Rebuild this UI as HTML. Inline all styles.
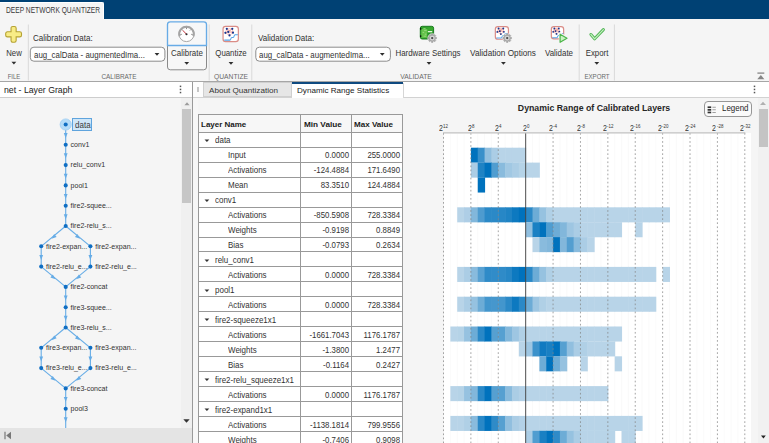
<!DOCTYPE html><html><head><meta charset="utf-8"><title>Deep Network Quantizer</title><style>
html,body{margin:0;padding:0;}
body{width:769px;height:443px;overflow:hidden;position:relative;background:#f5f5f5;font-family:"Liberation Sans",sans-serif;color:#222;}
.a{position:absolute;}
.t{position:absolute;white-space:nowrap;line-height:1;}
.ui{font-size:9.6px;color:#2a2a2a;}
.sec{font-size:8.2px;color:#6a6a6a;}
.c{transform:translateX(-50%);}
.r{transform:translateX(-100%);}
.arr{position:absolute;width:0;height:0;border-left:2.6px solid transparent;border-right:2.6px solid transparent;border-top:3px solid #333;}
.vsep{position:absolute;width:1px;background:#dcdcdc;}
.tb{font-size:8.6px;color:#222;}
.gl{font-size:7.05px;color:#333;}
</style></head><body>
<div class="a" style="left:0;top:0;width:769px;height:18.7px;background:#004174"></div>
<div class="a" style="left:0;top:18.7px;width:769px;height:1px;background:#fdfdfd"></div>
<div class="a" style="left:0;top:2px;width:103.8px;height:18px;background:#f5f5f5;border-top:1px solid #fff;border-right:1px solid #fff;border-radius:0 2px 0 0;box-sizing:border-box"></div>
<div class="t" style="left:5.70px;top:5.90px;font-size:8.4px;color:#3a3a3a;transform:scaleX(0.7942);transform-origin:0 0">DEEP NETWORK QUANTIZER</div>
<div class="a" style="left:0;top:19px;width:769px;height:61px;background:#f5f5f5"></div>
<svg class="a" style="left:0;top:19px" width="769" height="62" viewBox="0 19 769 62"><path d="M28.3 24.5V80.5" stroke="#d9d9d9" stroke-width="1"/><path d="M209.2 24.5V80.5" stroke="#d9d9d9" stroke-width="1"/><path d="M251.8 24.5V80.5" stroke="#d9d9d9" stroke-width="1"/><path d="M579.2 24.5V80.5" stroke="#d9d9d9" stroke-width="1"/><path d="M614.4 24.5V80.5" stroke="#d9d9d9" stroke-width="1"/><path d="M11.05 28.150000000000002 a1.7 1.7 0 0 1 1.7 -1.7 h1.6999999999999997 a1.7 1.7 0 0 1 1.7 1.7 V31.8 H19.8 a1.7 1.7 0 0 1 1.7 1.7 v1.6999999999999997 a1.7 1.7 0 0 1 -1.7 1.7 H16.15 V40.55 a1.7 1.7 0 0 1 -1.7 1.7 h-1.6999999999999997 a1.7 1.7 0 0 1 -1.7 -1.7 V36.9 H7.3999999999999995 a1.7 1.7 0 0 1 -1.7 -1.7 v-1.6999999999999997 a1.7 1.7 0 0 1 1.7 -1.7 H11.05 z" fill="#f8ec86" stroke="#b5a233" stroke-width="1.1"/><path d="M11.50 61.85h4.8L13.90 64.55z" fill="#2e2e2e"/><rect x="30.3" y="47.2" width="134.6" height="14" rx="3.6" fill="#fff" stroke="#8c8c8c" stroke-width="1"/><rect x="255.8" y="47.2" width="134.6" height="14" rx="3.6" fill="#fff" stroke="#8c8c8c" stroke-width="1"/><path d="M154.60 53.05h4.8L157.00 55.75z" fill="#2e2e2e"/><path d="M379.90 53.05h4.8L382.30 55.75z" fill="#2e2e2e"/><path d="M167.5 45.5V67a2.8 2.8 0 0 0 2.8 2.8h33.4a2.8 2.8 0 0 0 2.8-2.8V45.5" fill="#f7f7f7" stroke="#8a8a8a" stroke-width="1"/><path d="M167.5 45.5V24.6a2.8 2.8 0 0 1 2.8-2.8h33.4a2.8 2.8 0 0 1 2.8 2.8V45.5z" fill="#f6f7f8" stroke="#67abe6" stroke-width="1.35"/><circle cx="186.5" cy="34" r="7.6" fill="#fff" stroke="#a6a6a6" stroke-width="1"/><path d="M179.6 36.2A7.25 7.25 0 1 1 193.4 36.2" fill="none" stroke="#a4a4a4" stroke-width="2"/><g stroke="#6f6f6f" stroke-width="0.8"><path d="M186.5 27.6v1.5M180.4 34.6l1.4-.3M192.6 34.6l-1.4-.3M182.2 29.6l.9.9M190.8 29.6l-.9.9"/></g><path d="M186.5 34.2L182.9 30.5" stroke="#c9303a" stroke-width="1"/><circle cx="186.5" cy="34.2" r="1.05" fill="#2c2c2c"/><path d="M184.30 62.05h4.8L186.70 64.75z" fill="#2e2e2e"/><rect x="223.05" y="26.45" width="15.30" height="15.20" rx="2.6" fill="#fff" stroke="#da8c86" stroke-width="1.2"/><path d="M226.80 28.80L232.30 28.80M226.80 28.80L225.40 32.80M226.80 28.80L228.30 31.90M232.30 28.80L228.30 31.90M232.30 28.80L233.00 32.70M225.40 32.80L228.30 31.90M228.30 31.90L233.00 32.70M225.40 32.80L229.50 35.40M228.30 31.90L229.50 35.40M233.00 32.70L229.50 35.40M226.80 28.80L233.00 32.70M232.30 28.80L225.40 32.80" stroke="#f08a80" stroke-width="0.55" fill="none"/><circle cx="226.80" cy="28.80" r="1.08" fill="#15358f"/><circle cx="232.30" cy="28.80" r="1.08" fill="#15358f"/><circle cx="225.40" cy="32.80" r="1.08" fill="#15358f"/><circle cx="228.30" cy="31.90" r="1.08" fill="#15358f"/><circle cx="233.00" cy="32.70" r="1.08" fill="#15358f"/><circle cx="229.50" cy="35.40" r="1.08" fill="#15358f"/><path d="M224.30 40.10H229.90C231.10 40.10 230.50 37.50 231.90 37.40H233.10C234.50 37.40 233.70 35.00 235.10 34.80H237.90" fill="none" stroke="#55a4e8" stroke-width="1.05"/><path d="M228.60 62.05h4.8L231.00 64.75z" fill="#2e2e2e"/><rect x="420.3" y="26.3" width="13.3" height="12.7" rx="1.9" fill="#33a52c" stroke="#1b7a20" stroke-width="1"/><path d="M421.3 29h6.2v8.8h-6.2z" fill="#66c24c"/><path d="M427.4 32.6h5.6v5.6h-5.6z" fill="#249425"/><path d="M427.6 27.4h5.4v3.2h-5.4z" fill="#38aa2e"/><path d="M423.4 28.6h2.2M424.2 30.4h2.4M422.6 32.4h1.6M424.8 34.2h1.6M423.6 36.2h2.4" stroke="#a5e08c" stroke-width="0.8"/><rect x="427.9" y="31" width="4.3" height="1.3" fill="#e6f7df"/><rect x="420" y="28" width="1.3" height="1.7" fill="#0c1a0c"/><rect x="420" y="35.3" width="1.3" height="1.7" fill="#0c1a0c"/><circle cx="432.2" cy="38.1" r="4.800000000000001" fill="#f5f5f5" opacity=".75"/><path d="M436.54 37.36L436.54 38.84L435.41 39.02L435.13 39.72L435.79 40.64L434.74 41.69L433.82 41.03L433.12 41.31L432.94 42.44L431.46 42.44L431.28 41.31L430.58 41.03L429.66 41.69L428.61 40.64L429.27 39.72L428.99 39.02L427.86 38.84L427.86 37.36L428.99 37.18L429.27 36.48L428.61 35.56L429.66 34.51L430.58 35.17L431.28 34.89L431.46 33.76L432.94 33.76L433.12 34.89L433.82 35.17L434.74 34.51L435.79 35.56L435.13 36.48L435.41 37.18z" fill="#a9a9a9" stroke="#9b9b9b" stroke-width="0.5" stroke-linejoin="round"/><circle cx="432.2" cy="38.1" r="2.45" fill="#d6d6d6"/><circle cx="432.2" cy="38.1" r="1.15" fill="#484848"/><path d="M426.60 62.05h4.8L429.00 64.75z" fill="#2e2e2e"/><rect x="495.35" y="26.65" width="13.10" height="12.60" rx="2.6" fill="#fff" stroke="#da8c86" stroke-width="1.2"/><path d="M498.54 28.56L503.28 28.56M498.54 28.56L497.33 31.90M498.54 28.56L499.83 31.15M503.28 28.56L499.83 31.15M503.28 28.56L503.88 31.82M497.33 31.90L499.83 31.15M499.83 31.15L503.88 31.82M497.33 31.90L500.87 34.08M499.83 31.15L500.87 34.08M503.88 31.82L500.87 34.08M498.54 28.56L503.88 31.82M503.28 28.56L497.33 31.90" stroke="#f08a80" stroke-width="0.55" fill="none"/><circle cx="498.54" cy="28.56" r="0.94" fill="#15358f"/><circle cx="503.28" cy="28.56" r="0.94" fill="#15358f"/><circle cx="497.33" cy="31.90" r="0.94" fill="#15358f"/><circle cx="499.83" cy="31.15" r="0.94" fill="#15358f"/><circle cx="503.88" cy="31.82" r="0.94" fill="#15358f"/><circle cx="500.87" cy="34.08" r="0.94" fill="#15358f"/><path d="M496.38 38.01H501.21C502.25 38.01 501.73 35.84 502.94 35.75H503.97C505.18 35.75 504.49 33.74 505.69 33.58H508.11" fill="none" stroke="#55a4e8" stroke-width="1.05"/><circle cx="507.2" cy="38.1" r="4.800000000000001" fill="#f5f5f5" opacity=".75"/><path d="M511.54 37.36L511.54 38.84L510.41 39.02L510.13 39.72L510.79 40.64L509.74 41.69L508.82 41.03L508.12 41.31L507.94 42.44L506.46 42.44L506.28 41.31L505.58 41.03L504.66 41.69L503.61 40.64L504.27 39.72L503.99 39.02L502.86 38.84L502.86 37.36L503.99 37.18L504.27 36.48L503.61 35.56L504.66 34.51L505.58 35.17L506.28 34.89L506.46 33.76L507.94 33.76L508.12 34.89L508.82 35.17L509.74 34.51L510.79 35.56L510.13 36.48L510.41 37.18z" fill="#a9a9a9" stroke="#9b9b9b" stroke-width="0.5" stroke-linejoin="round"/><circle cx="507.2" cy="38.1" r="2.45" fill="#d6d6d6"/><circle cx="507.2" cy="38.1" r="1.15" fill="#484848"/><path d="M501.00 62.05h4.8L503.40 64.75z" fill="#2e2e2e"/><rect x="551.35" y="26.65" width="12.30" height="12.30" rx="2.6" fill="#fff" stroke="#da8c86" stroke-width="1.2"/><path d="M554.33 28.51L558.80 28.51M554.33 28.51L553.19 31.78M554.33 28.51L555.55 31.04M558.80 28.51L555.55 31.04M558.80 28.51L559.37 31.70M553.19 31.78L555.55 31.04M555.55 31.04L559.37 31.70M553.19 31.78L556.52 33.90M555.55 31.04L556.52 33.90M559.37 31.70L556.52 33.90M554.33 28.51L559.37 31.70M558.80 28.51L553.19 31.78" stroke="#f08a80" stroke-width="0.55" fill="none"/><circle cx="554.33" cy="28.51" r="0.89" fill="#15358f"/><circle cx="558.80" cy="28.51" r="0.89" fill="#15358f"/><circle cx="553.19" cy="31.78" r="0.89" fill="#15358f"/><circle cx="555.55" cy="31.04" r="0.89" fill="#15358f"/><circle cx="559.37" cy="31.70" r="0.89" fill="#15358f"/><circle cx="556.52" cy="33.90" r="0.89" fill="#15358f"/><path d="M552.30 37.75H556.85C557.83 37.75 557.34 35.62 558.48 35.54H559.45C560.59 35.54 559.94 33.58 561.08 33.41H563.35" fill="none" stroke="#55a4e8" stroke-width="1.05"/><path d="M560 33.6L560 42.7L567.4 38.1z" fill="#f5f5f5" stroke="#f5f5f5" stroke-width="2.4" stroke-linejoin="round"/><path d="M560.1 34.2L560.1 42.3L567 38.2z" fill="#c9f2c2" stroke="#4bb548" stroke-width="1.2" stroke-linejoin="round"/><path d="M590.9 34.5L594.6 38.8L603.4 29.6" fill="none" stroke="#4fb354" stroke-width="3" stroke-linecap="round" stroke-linejoin="round"/><path d="M590.9 34.5L594.6 38.8L603.4 29.6" fill="none" stroke="#c6f2c0" stroke-width="1.2" stroke-linecap="round" stroke-linejoin="round"/><path d="M594.40 62.05h4.8L596.80 64.75z" fill="#2e2e2e"/><path d="M757.4 73.1h6.9" stroke="#858585" stroke-width="1.3"/><path d="M757.3 79.3L760.85 75.1L764.4 79.3z" fill="#858585"/></svg>
<div class="t" style="left:13.80px;top:49.90px;font-size:8.2px;color:#323232;transform:translateX(-50%) scaleX(0.9449);transform-origin:50% 0">New</div>
<div class="t" style="left:13.80px;top:72.70px;font-size:7.3px;color:#6a6a6a;transform:translateX(-50%) scaleX(0.8108);transform-origin:50% 0">FILE</div>
<div class="t" style="left:32.50px;top:35.00px;font-size:8.2px;color:#323232;transform:scaleX(0.9791);transform-origin:0 0">Calibration Data:</div>
<div class="t" style="left:33.80px;top:51.70px;font-size:8.2px;color:#323232;transform:scaleX(0.9663);transform-origin:0 0">aug_calData - augmentedIma...</div>
<div class="t" style="left:118.50px;top:72.70px;font-size:7.3px;color:#6a6a6a;transform:translateX(-50%) scaleX(0.8769);transform-origin:50% 0">CALIBRATE</div>
<div class="t" style="left:186.50px;top:49.90px;font-size:8.2px;color:#323232;transform:translateX(-50%) scaleX(0.9690);transform-origin:50% 0">Calibrate</div>
<div class="t" style="left:230.80px;top:49.90px;font-size:8.2px;color:#323232;transform:translateX(-50%) scaleX(0.9598);transform-origin:50% 0">Quantize</div>
<div class="t" style="left:231.00px;top:72.70px;font-size:7.3px;color:#6a6a6a;transform:translateX(-50%) scaleX(0.9212);transform-origin:50% 0">QUANTIZE</div>
<div class="t" style="left:257.70px;top:35.00px;font-size:8.2px;color:#323232;transform:scaleX(0.9811);transform-origin:0 0">Validation Data:</div>
<div class="t" style="left:259.30px;top:51.70px;font-size:8.2px;color:#323232;transform:scaleX(0.9646);transform-origin:0 0">aug_calData - augmentedIma...</div>
<div class="t" style="left:428.40px;top:49.90px;font-size:8.2px;color:#323232;transform:translateX(-50%) scaleX(0.9666);transform-origin:50% 0">Hardware Settings</div>
<div class="t" style="left:416.20px;top:72.70px;font-size:7.3px;color:#6a6a6a;transform:translateX(-50%) scaleX(0.9236);transform-origin:50% 0">VALIDATE</div>
<div class="t" style="left:503.40px;top:49.90px;font-size:8.2px;color:#323232;transform:translateX(-50%) scaleX(1.0008);transform-origin:50% 0">Validation Options</div>
<div class="t" style="left:559.40px;top:49.90px;font-size:8.2px;color:#323232;transform:translateX(-50%) scaleX(0.9681);transform-origin:50% 0">Validate</div>
<div class="t" style="left:596.80px;top:49.90px;font-size:8.2px;color:#323232;transform:translateX(-50%) scaleX(0.9578);transform-origin:50% 0">Export</div>
<div class="t" style="left:596.80px;top:72.70px;font-size:7.3px;color:#6a6a6a;transform:translateX(-50%) scaleX(0.8432);transform-origin:50% 0">EXPORT</div>
<div class="a" style="left:0;top:81px;width:192px;height:16px;background:#fff"></div>
<div class="a" style="left:0;top:96.8px;width:192px;height:1px;background:#cdcdcd"></div>
<div class="t" style="left:4.20px;top:85.80px;font-size:8.9px;color:#1a1a1a;transform:scaleX(0.9834);transform-origin:0 0">net - Layer Graph</div>
<svg class="a" style="left:178.9px;top:84.8px" width="3" height="9" viewBox="0 0 3 9"><g fill="#555"><rect x="0.75" y="0.6" width="1.5" height="1.5"/><rect x="0.75" y="3.7" width="1.5" height="1.5"/><rect x="0.75" y="6.8" width="1.5" height="1.5"/></g></svg>
<div class="a" style="left:0;top:97.8px;width:181.4px;height:330.2px;background:#f5f5f5"></div>
<div class="a" style="left:181.4px;top:97.8px;width:10.6px;height:330.2px;background:#f0f0f0"></div>
<div class="a" style="left:182px;top:109.3px;width:9px;height:93.5px;background:#c6c6c6"></div>
<svg class="a" style="left:182.5px;top:100.6px" width="8" height="5" viewBox="0 0 8 5"><path d="M1.4 4.2L4 1.2L6.6 4.2z" fill="#9c9c9c"/></svg>
<svg class="a" style="left:183.3px;top:418.5px" width="7" height="4" viewBox="0 0 7 4"><path d="M0.3 0.3h6.4L3.5 3.8z" fill="#333"/></svg>
<div class="a" style="left:0;top:428px;width:192px;height:15px;background:#e4e4e4"></div>
<svg class="a" style="left:4px;top:431px" width="8" height="9" viewBox="0 0 8 9"><path d="M1 0.8v7.4" stroke="#777" stroke-width="1.2"/><path d="M7 0.8v7.4L2.2 4.5z" fill="#777"/></svg>
<div class="a" style="left:192px;top:81px;width:1px;height:362px;background:#9a9a9a"></div>
<div class="a" style="left:193px;top:81px;width:5px;height:362px;background:#f7f7f7"></div>
<svg class="a" style="left:0;top:99px" width="181" height="329" viewBox="0 99 181 329"><path d="M65.7 124.5L65.7 144.8" stroke="#66acE6" stroke-width="1.1" fill="none"/><path d="M-1.9 -2.5L1.9 -2.5L0 2.6z" fill="#66acE6" transform="translate(65.7,135.6) rotate(0.0)"/><path d="M65.7 144.8L65.7 165.1" stroke="#66acE6" stroke-width="1.1" fill="none"/><path d="M-1.9 -2.5L1.9 -2.5L0 2.6z" fill="#66acE6" transform="translate(65.7,155.8) rotate(0.0)"/><path d="M65.7 165.1L65.7 185.4" stroke="#66acE6" stroke-width="1.1" fill="none"/><path d="M-1.9 -2.5L1.9 -2.5L0 2.6z" fill="#66acE6" transform="translate(65.7,176.2) rotate(0.0)"/><path d="M65.7 185.4L65.7 205.7" stroke="#66acE6" stroke-width="1.1" fill="none"/><path d="M-1.9 -2.5L1.9 -2.5L0 2.6z" fill="#66acE6" transform="translate(65.7,196.5) rotate(0.0)"/><path d="M65.7 205.7L65.7 226.0" stroke="#66acE6" stroke-width="1.1" fill="none"/><path d="M-1.9 -2.5L1.9 -2.5L0 2.6z" fill="#66acE6" transform="translate(65.7,216.8) rotate(0.0)"/><path d="M65.7 226.0L41.2 246.3" stroke="#66acE6" stroke-width="1.1" fill="none"/><path d="M-1.9 -2.5L1.9 -2.5L0 2.6z" fill="#66acE6" transform="translate(53.5,237.1) rotate(50.4)"/><path d="M65.7 226.0L90.4 246.3" stroke="#66acE6" stroke-width="1.1" fill="none"/><path d="M-1.9 -2.5L1.9 -2.5L0 2.6z" fill="#66acE6" transform="translate(78.1,237.1) rotate(-50.6)"/><path d="M41.2 246.3L41.2 266.6" stroke="#66acE6" stroke-width="1.1" fill="none"/><path d="M-1.9 -2.5L1.9 -2.5L0 2.6z" fill="#66acE6" transform="translate(41.2,257.4) rotate(0.0)"/><path d="M90.4 246.3L90.4 266.6" stroke="#66acE6" stroke-width="1.1" fill="none"/><path d="M-1.9 -2.5L1.9 -2.5L0 2.6z" fill="#66acE6" transform="translate(90.4,257.4) rotate(0.0)"/><path d="M41.2 266.6L65.7 286.9" stroke="#66acE6" stroke-width="1.1" fill="none"/><path d="M-1.9 -2.5L1.9 -2.5L0 2.6z" fill="#66acE6" transform="translate(53.5,277.6) rotate(-50.4)"/><path d="M90.4 266.6L65.7 286.9" stroke="#66acE6" stroke-width="1.1" fill="none"/><path d="M-1.9 -2.5L1.9 -2.5L0 2.6z" fill="#66acE6" transform="translate(78.1,277.6) rotate(50.6)"/><path d="M65.7 286.9L65.7 307.2" stroke="#66acE6" stroke-width="1.1" fill="none"/><path d="M-1.9 -2.5L1.9 -2.5L0 2.6z" fill="#66acE6" transform="translate(65.7,297.9) rotate(0.0)"/><path d="M65.7 307.2L65.7 327.5" stroke="#66acE6" stroke-width="1.1" fill="none"/><path d="M-1.9 -2.5L1.9 -2.5L0 2.6z" fill="#66acE6" transform="translate(65.7,318.2) rotate(0.0)"/><path d="M65.7 327.5L41.2 347.8" stroke="#66acE6" stroke-width="1.1" fill="none"/><path d="M-1.9 -2.5L1.9 -2.5L0 2.6z" fill="#66acE6" transform="translate(53.5,338.5) rotate(50.4)"/><path d="M65.7 327.5L90.4 347.8" stroke="#66acE6" stroke-width="1.1" fill="none"/><path d="M-1.9 -2.5L1.9 -2.5L0 2.6z" fill="#66acE6" transform="translate(78.1,338.5) rotate(-50.6)"/><path d="M41.2 347.8L41.2 368.1" stroke="#66acE6" stroke-width="1.1" fill="none"/><path d="M-1.9 -2.5L1.9 -2.5L0 2.6z" fill="#66acE6" transform="translate(41.2,358.9) rotate(0.0)"/><path d="M90.4 347.8L90.4 368.1" stroke="#66acE6" stroke-width="1.1" fill="none"/><path d="M-1.9 -2.5L1.9 -2.5L0 2.6z" fill="#66acE6" transform="translate(90.4,358.9) rotate(0.0)"/><path d="M41.2 368.1L65.7 388.4" stroke="#66acE6" stroke-width="1.1" fill="none"/><path d="M-1.9 -2.5L1.9 -2.5L0 2.6z" fill="#66acE6" transform="translate(53.5,379.1) rotate(-50.4)"/><path d="M90.4 368.1L65.7 388.4" stroke="#66acE6" stroke-width="1.1" fill="none"/><path d="M-1.9 -2.5L1.9 -2.5L0 2.6z" fill="#66acE6" transform="translate(78.1,379.1) rotate(50.6)"/><path d="M65.7 388.4L65.7 408.7" stroke="#66acE6" stroke-width="1.1" fill="none"/><path d="M-1.9 -2.5L1.9 -2.5L0 2.6z" fill="#66acE6" transform="translate(65.7,399.4) rotate(0.0)"/><path d="M65.7 408.7L65.7 429.0" stroke="#66acE6" stroke-width="1.1" fill="none"/><path d="M-1.9 -2.5L1.9 -2.5L0 2.6z" fill="#66acE6" transform="translate(65.7,419.8) rotate(0.0)"/><circle cx="65.7" cy="124.5" r="5.6" fill="#b5dcf8" stroke="#9ccdf3" stroke-width="0.8"/><circle cx="65.7" cy="124.5" r="2.05" fill="#0f6ec3"/><circle cx="65.7" cy="144.8" r="2.05" fill="#0f6ec3"/><circle cx="65.7" cy="165.1" r="2.05" fill="#0f6ec3"/><circle cx="65.7" cy="185.4" r="2.05" fill="#0f6ec3"/><circle cx="65.7" cy="205.7" r="2.05" fill="#0f6ec3"/><circle cx="65.7" cy="226.0" r="2.05" fill="#0f6ec3"/><circle cx="41.2" cy="246.3" r="2.05" fill="#0f6ec3"/><circle cx="90.4" cy="246.3" r="2.05" fill="#0f6ec3"/><circle cx="41.2" cy="266.6" r="2.05" fill="#0f6ec3"/><circle cx="90.4" cy="266.6" r="2.05" fill="#0f6ec3"/><circle cx="65.7" cy="286.9" r="2.05" fill="#0f6ec3"/><circle cx="65.7" cy="307.2" r="2.05" fill="#0f6ec3"/><circle cx="65.7" cy="327.5" r="2.05" fill="#0f6ec3"/><circle cx="41.2" cy="347.8" r="2.05" fill="#0f6ec3"/><circle cx="90.4" cy="347.8" r="2.05" fill="#0f6ec3"/><circle cx="41.2" cy="368.1" r="2.05" fill="#0f6ec3"/><circle cx="90.4" cy="368.1" r="2.05" fill="#0f6ec3"/><circle cx="65.7" cy="388.4" r="2.05" fill="#0f6ec3"/><circle cx="65.7" cy="408.7" r="2.05" fill="#0f6ec3"/></svg>
<div class="a" style="left:72.2px;top:118px;width:20.3px;height:13.4px;background:#cfe6f8;border:0.9px solid #5fa4dd;box-sizing:border-box"></div>
<div class="t" style="left:75.00px;top:120.60px;font-size:8.3px;color:#3a3a3a;transform:scaleX(0.9657);transform-origin:0 0">data</div>
<div class="t gl" style="left:70.6px;top:141.1px">conv1</div>
<div class="t gl" style="left:70.6px;top:161.4px">relu_conv1</div>
<div class="t gl" style="left:70.6px;top:181.7px">pool1</div>
<div class="t gl" style="left:70.6px;top:202.0px">fire2-squee...</div>
<div class="t gl" style="left:70.6px;top:222.3px">fire2-relu_s...</div>
<div class="t gl" style="left:46.1px;top:242.6px">fire2-expan...</div>
<div class="t gl" style="left:95.3px;top:242.6px">fire2-expan...</div>
<div class="t gl" style="left:46.1px;top:262.9px">fire2-relu_e...</div>
<div class="t gl" style="left:95.3px;top:262.9px">fire2-relu_e...</div>
<div class="t gl" style="left:70.6px;top:283.2px">fire2-concat</div>
<div class="t gl" style="left:70.6px;top:303.5px">fire3-squee...</div>
<div class="t gl" style="left:70.6px;top:323.8px">fire3-relu_s...</div>
<div class="t gl" style="left:46.1px;top:344.1px">fire3-expan...</div>
<div class="t gl" style="left:95.3px;top:344.1px">fire3-expan...</div>
<div class="t gl" style="left:46.1px;top:364.4px">fire3-relu_e...</div>
<div class="t gl" style="left:95.3px;top:364.4px">fire3-relu_e...</div>
<div class="t gl" style="left:70.6px;top:384.7px">fire3-concat</div>
<div class="t gl" style="left:70.6px;top:405.0px">pool3</div>
<div class="a" style="left:198px;top:81px;width:571px;height:16.5px;background:#fff"></div>
<div class="a" style="left:193px;top:96.8px;width:576px;height:1px;background:#d2d2d2"></div>
<div class="a" style="left:193px;top:81px;width:10.5px;height:16px;background:#fdfdfd"></div>
<div class="a" style="left:197.3px;top:86.6px;width:1.9px;height:5px;background:#c6c6c6"></div>
<div class="a" style="left:203.2px;top:82.3px;width:88.4px;height:15px;background:#e6e6e6;border:1px solid #cfcfcf;box-sizing:border-box"></div>
<div class="t" style="left:209.10px;top:86.70px;font-size:8.1px;color:#333;transform:scaleX(1.0000);transform-origin:0 0">About Quantization</div>
<div class="a" style="left:291.6px;top:81px;width:111.6px;height:17px;background:#fff"></div>
<div class="a" style="left:0;top:81.3px;width:769px;height:1px;background:#a6a6a6"></div>
<div class="a" style="left:291.6px;top:81.9px;width:111.6px;height:1.9px;background:#0f4a80"></div>
<div class="a" style="left:403.2px;top:83px;width:1px;height:14.5px;background:#d6d6d6"></div>
<div class="t" style="left:297.00px;top:86.70px;font-size:8.1px;color:#1a1a1a;transform:scaleX(1.0000);transform-origin:0 0">Dynamic Range Statistics</div>
<svg class="a" style="left:753.3px;top:85px" width="3" height="9" viewBox="0 0 3 9"><g fill="#555"><rect x="0.75" y="0.6" width="1.5" height="1.5"/><rect x="0.75" y="3.7" width="1.5" height="1.5"/><rect x="0.75" y="6.8" width="1.5" height="1.5"/></g></svg>
<div class="a" style="left:198.4px;top:114.6px;width:204.20000000000002px;height:328.4px;background:#fff"></div>
<div class="a" style="left:198.4px;top:114.6px;width:204.20000000000002px;height:17.700000000000017px;background:#f7f7f7"></div>
<div class="a" style="left:198.4px;top:114.1px;width:204.70000000000002px;height:1px;background:#999"></div>
<div class="a" style="left:198.4px;top:131.80px;width:204.20000000000002px;height:1px;background:#999"></div>
<div class="a" style="left:198.4px;top:146.76px;width:204.20000000000002px;height:1px;background:#999"></div>
<div class="a" style="left:198.4px;top:161.72px;width:204.20000000000002px;height:1px;background:#999"></div>
<div class="a" style="left:198.4px;top:176.68px;width:204.20000000000002px;height:1px;background:#999"></div>
<div class="a" style="left:198.4px;top:191.64px;width:204.20000000000002px;height:1px;background:#999"></div>
<div class="a" style="left:198.4px;top:206.60px;width:204.20000000000002px;height:1px;background:#999"></div>
<div class="a" style="left:198.4px;top:221.56px;width:204.20000000000002px;height:1px;background:#999"></div>
<div class="a" style="left:198.4px;top:236.52px;width:204.20000000000002px;height:1px;background:#999"></div>
<div class="a" style="left:198.4px;top:251.48px;width:204.20000000000002px;height:1px;background:#999"></div>
<div class="a" style="left:198.4px;top:266.44px;width:204.20000000000002px;height:1px;background:#999"></div>
<div class="a" style="left:198.4px;top:281.40px;width:204.20000000000002px;height:1px;background:#999"></div>
<div class="a" style="left:198.4px;top:296.36px;width:204.20000000000002px;height:1px;background:#999"></div>
<div class="a" style="left:198.4px;top:311.32px;width:204.20000000000002px;height:1px;background:#999"></div>
<div class="a" style="left:198.4px;top:326.28px;width:204.20000000000002px;height:1px;background:#999"></div>
<div class="a" style="left:198.4px;top:341.24px;width:204.20000000000002px;height:1px;background:#999"></div>
<div class="a" style="left:198.4px;top:356.20px;width:204.20000000000002px;height:1px;background:#999"></div>
<div class="a" style="left:198.4px;top:371.16px;width:204.20000000000002px;height:1px;background:#999"></div>
<div class="a" style="left:198.4px;top:386.12px;width:204.20000000000002px;height:1px;background:#999"></div>
<div class="a" style="left:198.4px;top:401.08px;width:204.20000000000002px;height:1px;background:#999"></div>
<div class="a" style="left:198.4px;top:416.04px;width:204.20000000000002px;height:1px;background:#999"></div>
<div class="a" style="left:198.4px;top:431.00px;width:204.20000000000002px;height:1px;background:#999"></div>
<div class="a" style="left:197.9px;top:114.1px;width:1px;height:329.4px;background:#999"></div>
<div class="a" style="left:300.1px;top:114.1px;width:1px;height:329.4px;background:#999"></div>
<div class="a" style="left:351.0px;top:114.1px;width:1px;height:329.4px;background:#999"></div>
<div class="a" style="left:402.1px;top:114.1px;width:1px;height:329.4px;background:#999"></div>
<div class="t" style="left:201.40px;top:121.20px;font-size:8.1px;color:#1a1a1a;font-weight:bold;transform:scaleX(0.9863);transform-origin:0 0">Layer Name</div>
<div class="t" style="left:303.80px;top:121.20px;font-size:8.1px;color:#1a1a1a;font-weight:bold;transform:scaleX(1.0118);transform-origin:0 0">Min Value</div>
<div class="t" style="left:354.20px;top:121.20px;font-size:8.1px;color:#1a1a1a;font-weight:bold;transform:scaleX(0.9956);transform-origin:0 0">Max Value</div>
<svg class="a" style="left:204px;top:138.90px" width="6" height="4" viewBox="0 0 6 4"><path d="M0.5 0.4h4.8L2.9 3z" fill="#333"/></svg>
<div class="t" style="left:215.20px;top:137.40px;font-size:8.2px;color:#323232;transform:scaleX(0.9750);transform-origin:0 0">data</div>
<div class="t" style="left:227.80px;top:152.36px;font-size:8.2px;color:#323232;transform:scaleX(0.9750);transform-origin:0 0">Input</div>
<div class="t" style="left:349.20px;top:152.36px;font-size:8.2px;color:#323232;transform:translateX(-100%) scaleX(0.9550);transform-origin:100% 0">0.0000</div>
<div class="t" style="left:400.10px;top:152.36px;font-size:8.2px;color:#323232;transform:translateX(-100%) scaleX(0.9550);transform-origin:100% 0">255.0000</div>
<div class="t" style="left:227.80px;top:167.32px;font-size:8.2px;color:#323232;transform:scaleX(0.9750);transform-origin:0 0">Activations</div>
<div class="t" style="left:349.20px;top:167.32px;font-size:8.2px;color:#323232;transform:translateX(-100%) scaleX(0.9550);transform-origin:100% 0">-124.4884</div>
<div class="t" style="left:400.10px;top:167.32px;font-size:8.2px;color:#323232;transform:translateX(-100%) scaleX(0.9550);transform-origin:100% 0">171.6490</div>
<div class="t" style="left:227.80px;top:182.28px;font-size:8.2px;color:#323232;transform:scaleX(0.9750);transform-origin:0 0">Mean</div>
<div class="t" style="left:349.20px;top:182.28px;font-size:8.2px;color:#323232;transform:translateX(-100%) scaleX(0.9550);transform-origin:100% 0">83.3510</div>
<div class="t" style="left:400.10px;top:182.28px;font-size:8.2px;color:#323232;transform:translateX(-100%) scaleX(0.9550);transform-origin:100% 0">124.4884</div>
<svg class="a" style="left:204px;top:198.74px" width="6" height="4" viewBox="0 0 6 4"><path d="M0.5 0.4h4.8L2.9 3z" fill="#333"/></svg>
<div class="t" style="left:215.20px;top:197.24px;font-size:8.2px;color:#323232;transform:scaleX(0.9750);transform-origin:0 0">conv1</div>
<div class="t" style="left:227.80px;top:212.20px;font-size:8.2px;color:#323232;transform:scaleX(0.9750);transform-origin:0 0">Activations</div>
<div class="t" style="left:349.20px;top:212.20px;font-size:8.2px;color:#323232;transform:translateX(-100%) scaleX(0.9550);transform-origin:100% 0">-850.5908</div>
<div class="t" style="left:400.10px;top:212.20px;font-size:8.2px;color:#323232;transform:translateX(-100%) scaleX(0.9550);transform-origin:100% 0">728.3384</div>
<div class="t" style="left:227.80px;top:227.16px;font-size:8.2px;color:#323232;transform:scaleX(0.9750);transform-origin:0 0">Weights</div>
<div class="t" style="left:349.20px;top:227.16px;font-size:8.2px;color:#323232;transform:translateX(-100%) scaleX(0.9550);transform-origin:100% 0">-0.9198</div>
<div class="t" style="left:400.10px;top:227.16px;font-size:8.2px;color:#323232;transform:translateX(-100%) scaleX(0.9550);transform-origin:100% 0">0.8849</div>
<div class="t" style="left:227.80px;top:242.12px;font-size:8.2px;color:#323232;transform:scaleX(0.9750);transform-origin:0 0">Bias</div>
<div class="t" style="left:349.20px;top:242.12px;font-size:8.2px;color:#323232;transform:translateX(-100%) scaleX(0.9550);transform-origin:100% 0">-0.0793</div>
<div class="t" style="left:400.10px;top:242.12px;font-size:8.2px;color:#323232;transform:translateX(-100%) scaleX(0.9550);transform-origin:100% 0">0.2634</div>
<svg class="a" style="left:204px;top:258.58px" width="6" height="4" viewBox="0 0 6 4"><path d="M0.5 0.4h4.8L2.9 3z" fill="#333"/></svg>
<div class="t" style="left:215.20px;top:257.08px;font-size:8.2px;color:#323232;transform:scaleX(0.9750);transform-origin:0 0">relu_conv1</div>
<div class="t" style="left:227.80px;top:272.04px;font-size:8.2px;color:#323232;transform:scaleX(0.9750);transform-origin:0 0">Activations</div>
<div class="t" style="left:349.20px;top:272.04px;font-size:8.2px;color:#323232;transform:translateX(-100%) scaleX(0.9550);transform-origin:100% 0">0.0000</div>
<div class="t" style="left:400.10px;top:272.04px;font-size:8.2px;color:#323232;transform:translateX(-100%) scaleX(0.9550);transform-origin:100% 0">728.3384</div>
<svg class="a" style="left:204px;top:288.50px" width="6" height="4" viewBox="0 0 6 4"><path d="M0.5 0.4h4.8L2.9 3z" fill="#333"/></svg>
<div class="t" style="left:215.20px;top:287.00px;font-size:8.2px;color:#323232;transform:scaleX(0.9750);transform-origin:0 0">pool1</div>
<div class="t" style="left:227.80px;top:301.96px;font-size:8.2px;color:#323232;transform:scaleX(0.9750);transform-origin:0 0">Activations</div>
<div class="t" style="left:349.20px;top:301.96px;font-size:8.2px;color:#323232;transform:translateX(-100%) scaleX(0.9550);transform-origin:100% 0">0.0000</div>
<div class="t" style="left:400.10px;top:301.96px;font-size:8.2px;color:#323232;transform:translateX(-100%) scaleX(0.9550);transform-origin:100% 0">728.3384</div>
<svg class="a" style="left:204px;top:318.42px" width="6" height="4" viewBox="0 0 6 4"><path d="M0.5 0.4h4.8L2.9 3z" fill="#333"/></svg>
<div class="t" style="left:215.20px;top:316.92px;font-size:8.2px;color:#323232;transform:scaleX(0.9750);transform-origin:0 0">fire2-squeeze1x1</div>
<div class="t" style="left:227.80px;top:331.88px;font-size:8.2px;color:#323232;transform:scaleX(0.9750);transform-origin:0 0">Activations</div>
<div class="t" style="left:349.20px;top:331.88px;font-size:8.2px;color:#323232;transform:translateX(-100%) scaleX(0.9550);transform-origin:100% 0">-1661.7043</div>
<div class="t" style="left:400.10px;top:331.88px;font-size:8.2px;color:#323232;transform:translateX(-100%) scaleX(0.9550);transform-origin:100% 0">1176.1787</div>
<div class="t" style="left:227.80px;top:346.84px;font-size:8.2px;color:#323232;transform:scaleX(0.9750);transform-origin:0 0">Weights</div>
<div class="t" style="left:349.20px;top:346.84px;font-size:8.2px;color:#323232;transform:translateX(-100%) scaleX(0.9550);transform-origin:100% 0">-1.3800</div>
<div class="t" style="left:400.10px;top:346.84px;font-size:8.2px;color:#323232;transform:translateX(-100%) scaleX(0.9550);transform-origin:100% 0">1.2477</div>
<div class="t" style="left:227.80px;top:361.80px;font-size:8.2px;color:#323232;transform:scaleX(0.9750);transform-origin:0 0">Bias</div>
<div class="t" style="left:349.20px;top:361.80px;font-size:8.2px;color:#323232;transform:translateX(-100%) scaleX(0.9550);transform-origin:100% 0">-0.1164</div>
<div class="t" style="left:400.10px;top:361.80px;font-size:8.2px;color:#323232;transform:translateX(-100%) scaleX(0.9550);transform-origin:100% 0">0.2427</div>
<svg class="a" style="left:204px;top:378.26px" width="6" height="4" viewBox="0 0 6 4"><path d="M0.5 0.4h4.8L2.9 3z" fill="#333"/></svg>
<div class="t" style="left:215.20px;top:376.76px;font-size:8.2px;color:#323232;transform:scaleX(0.9750);transform-origin:0 0">fire2-relu_squeeze1x1</div>
<div class="t" style="left:227.80px;top:391.72px;font-size:8.2px;color:#323232;transform:scaleX(0.9750);transform-origin:0 0">Activations</div>
<div class="t" style="left:349.20px;top:391.72px;font-size:8.2px;color:#323232;transform:translateX(-100%) scaleX(0.9550);transform-origin:100% 0">0.0000</div>
<div class="t" style="left:400.10px;top:391.72px;font-size:8.2px;color:#323232;transform:translateX(-100%) scaleX(0.9550);transform-origin:100% 0">1176.1787</div>
<svg class="a" style="left:204px;top:408.18px" width="6" height="4" viewBox="0 0 6 4"><path d="M0.5 0.4h4.8L2.9 3z" fill="#333"/></svg>
<div class="t" style="left:215.20px;top:406.68px;font-size:8.2px;color:#323232;transform:scaleX(0.9750);transform-origin:0 0">fire2-expand1x1</div>
<div class="t" style="left:227.80px;top:421.64px;font-size:8.2px;color:#323232;transform:scaleX(0.9750);transform-origin:0 0">Activations</div>
<div class="t" style="left:349.20px;top:421.64px;font-size:8.2px;color:#323232;transform:translateX(-100%) scaleX(0.9550);transform-origin:100% 0">-1138.1814</div>
<div class="t" style="left:400.10px;top:421.64px;font-size:8.2px;color:#323232;transform:translateX(-100%) scaleX(0.9550);transform-origin:100% 0">799.9556</div>
<div class="t" style="left:227.80px;top:436.60px;font-size:8.2px;color:#323232;transform:scaleX(0.9750);transform-origin:0 0">Weights</div>
<div class="t" style="left:349.20px;top:436.60px;font-size:8.2px;color:#323232;transform:translateX(-100%) scaleX(0.9550);transform-origin:100% 0">-0.7406</div>
<div class="t" style="left:400.10px;top:436.60px;font-size:8.2px;color:#323232;transform:translateX(-100%) scaleX(0.9550);transform-origin:100% 0">0.9098</div>
<div class="a" style="left:443.5px;top:133px;width:307.79999999999995px;height:310px;background:#fff"></div>
<div class="t" style="left:593.70px;top:104.20px;font-size:9.2px;color:#262626;font-weight:bold;transform:translateX(-50%) scaleX(0.9536);transform-origin:50% 0">Dynamic Range of Calibrated Layers</div>
<div class="a" style="left:704.3px;top:101.1px;width:47.6px;height:16px;border:1px solid #969696;border-radius:4px;background:#fafafa;box-sizing:border-box"></div>
<svg class="a" style="left:707px;top:104.5px" width="10" height="10" viewBox="0 0 10 10"><g fill="#333"><rect x="0.6" y="1.4" width="3.6" height="1.7"/><rect x="0.6" y="4.0" width="3.6" height="1.7"/><rect x="0.6" y="6.6" width="3.6" height="1.7"/></g><g fill="#8a8a8a"><rect x="5.4" y="1.8" width="3.4" height="0.8"/><rect x="5.4" y="4.4" width="3.4" height="0.8"/><rect x="5.4" y="7" width="3.4" height="0.8"/></g></svg>
<div class="t" style="left:721.80px;top:104.30px;font-size:9.1px;color:#262626;transform:scaleX(0.8727);transform-origin:0 0">Legend</div>
<svg class="a" style="left:0;top:0" width="769" height="443" viewBox="0 0 769 443"><path d="M450.35 133.5V443" stroke="#f8f8f8" stroke-width="0.7"/><path d="M457.20 133.5V443" stroke="#f8f8f8" stroke-width="0.7"/><path d="M464.04 133.5V443" stroke="#f8f8f8" stroke-width="0.7"/><path d="M477.74 133.5V443" stroke="#f8f8f8" stroke-width="0.7"/><path d="M484.59 133.5V443" stroke="#f8f8f8" stroke-width="0.7"/><path d="M491.44 133.5V443" stroke="#f8f8f8" stroke-width="0.7"/><path d="M505.13 133.5V443" stroke="#f8f8f8" stroke-width="0.7"/><path d="M511.98 133.5V443" stroke="#f8f8f8" stroke-width="0.7"/><path d="M518.83 133.5V443" stroke="#f8f8f8" stroke-width="0.7"/><path d="M532.52 133.5V443" stroke="#f8f8f8" stroke-width="0.7"/><path d="M539.37 133.5V443" stroke="#f8f8f8" stroke-width="0.7"/><path d="M546.22 133.5V443" stroke="#f8f8f8" stroke-width="0.7"/><path d="M559.92 133.5V443" stroke="#f8f8f8" stroke-width="0.7"/><path d="M566.76 133.5V443" stroke="#f8f8f8" stroke-width="0.7"/><path d="M573.61 133.5V443" stroke="#f8f8f8" stroke-width="0.7"/><path d="M587.31 133.5V443" stroke="#f8f8f8" stroke-width="0.7"/><path d="M594.16 133.5V443" stroke="#f8f8f8" stroke-width="0.7"/><path d="M601.00 133.5V443" stroke="#f8f8f8" stroke-width="0.7"/><path d="M614.70 133.5V443" stroke="#f8f8f8" stroke-width="0.7"/><path d="M621.55 133.5V443" stroke="#f8f8f8" stroke-width="0.7"/><path d="M628.40 133.5V443" stroke="#f8f8f8" stroke-width="0.7"/><path d="M642.09 133.5V443" stroke="#f8f8f8" stroke-width="0.7"/><path d="M648.94 133.5V443" stroke="#f8f8f8" stroke-width="0.7"/><path d="M655.79 133.5V443" stroke="#f8f8f8" stroke-width="0.7"/><path d="M669.48 133.5V443" stroke="#f8f8f8" stroke-width="0.7"/><path d="M676.33 133.5V443" stroke="#f8f8f8" stroke-width="0.7"/><path d="M683.18 133.5V443" stroke="#f8f8f8" stroke-width="0.7"/><path d="M696.88 133.5V443" stroke="#f8f8f8" stroke-width="0.7"/><path d="M703.72 133.5V443" stroke="#f8f8f8" stroke-width="0.7"/><path d="M710.57 133.5V443" stroke="#f8f8f8" stroke-width="0.7"/><path d="M724.27 133.5V443" stroke="#f8f8f8" stroke-width="0.7"/><path d="M731.12 133.5V443" stroke="#f8f8f8" stroke-width="0.7"/><path d="M737.96 133.5V443" stroke="#f8f8f8" stroke-width="0.7"/><rect x="470.89" y="147.70" width="7.35" height="15.05" fill="#0072bd"/><rect x="477.74" y="147.70" width="7.35" height="15.05" fill="#3990ca"/><rect x="484.59" y="147.70" width="7.35" height="15.05" fill="#91bfdf"/><rect x="491.44" y="147.70" width="7.35" height="15.05" fill="#abcde5"/><rect x="498.28" y="147.70" width="7.35" height="15.05" fill="#b8d4e8"/><rect x="505.13" y="147.70" width="7.35" height="15.05" fill="#b8d4e8"/><rect x="511.98" y="147.70" width="7.35" height="15.05" fill="#b8d4e8"/><rect x="518.83" y="147.70" width="7.35" height="15.05" fill="#b8d4e8"/><rect x="470.89" y="162.60" width="7.35" height="15.05" fill="#abcde5"/><rect x="477.74" y="162.60" width="7.35" height="15.05" fill="#1f83c4"/><rect x="484.59" y="162.60" width="7.35" height="15.05" fill="#0072bd"/><rect x="491.44" y="162.60" width="7.35" height="15.05" fill="#509dd0"/><rect x="498.28" y="162.60" width="7.35" height="15.05" fill="#89bbdd"/><rect x="505.13" y="162.60" width="7.35" height="15.05" fill="#a1c8e3"/><rect x="511.98" y="162.60" width="7.35" height="15.05" fill="#abcde5"/><rect x="518.83" y="162.60" width="7.35" height="15.05" fill="#b5d3e7"/><rect x="525.68" y="162.60" width="7.35" height="15.05" fill="#b8d4e8"/><rect x="532.52" y="162.60" width="7.35" height="15.05" fill="#b8d4e8"/><rect x="477.74" y="177.50" width="7.35" height="15.05" fill="#0072bd"/><rect x="457.20" y="207.30" width="7.35" height="15.05" fill="#b8d4e8"/><rect x="464.04" y="207.30" width="7.35" height="15.05" fill="#aecee6"/><rect x="470.89" y="207.30" width="7.35" height="15.05" fill="#82b7db"/><rect x="477.74" y="207.30" width="7.35" height="15.05" fill="#4e9bcf"/><rect x="484.59" y="207.30" width="7.35" height="15.05" fill="#2b89c7"/><rect x="491.44" y="207.30" width="7.35" height="15.05" fill="#2b89c7"/><rect x="498.28" y="207.30" width="7.35" height="15.05" fill="#2787c6"/><rect x="505.13" y="207.30" width="7.35" height="15.05" fill="#1f83c4"/><rect x="511.98" y="207.30" width="7.35" height="15.05" fill="#0d79c0"/><rect x="518.83" y="207.30" width="7.35" height="15.05" fill="#0072bd"/><rect x="525.68" y="207.30" width="7.35" height="15.05" fill="#2c89c7"/><rect x="532.52" y="207.30" width="7.35" height="15.05" fill="#6dacd6"/><rect x="539.37" y="207.30" width="7.35" height="15.05" fill="#96c2e0"/><rect x="546.22" y="207.30" width="7.35" height="15.05" fill="#b0d0e6"/><rect x="553.07" y="207.30" width="7.35" height="15.05" fill="#b8d4e8"/><rect x="559.92" y="207.30" width="7.35" height="15.05" fill="#b8d4e8"/><rect x="566.76" y="207.30" width="7.35" height="15.05" fill="#b8d4e8"/><rect x="573.61" y="207.30" width="7.35" height="15.05" fill="#b8d4e8"/><rect x="580.46" y="207.30" width="7.35" height="15.05" fill="#b8d4e8"/><rect x="587.31" y="207.30" width="7.35" height="15.05" fill="#b8d4e8"/><rect x="594.16" y="207.30" width="7.35" height="15.05" fill="#b8d4e8"/><rect x="601.00" y="207.30" width="7.35" height="15.05" fill="#b8d4e8"/><rect x="607.85" y="207.30" width="7.35" height="15.05" fill="#b8d4e8"/><rect x="614.70" y="207.30" width="7.35" height="15.05" fill="#b8d4e8"/><rect x="621.55" y="207.30" width="7.35" height="15.05" fill="#b8d4e8"/><rect x="628.40" y="207.30" width="7.35" height="15.05" fill="#b8d4e8"/><rect x="635.24" y="207.30" width="7.35" height="15.05" fill="#b8d4e8"/><rect x="642.09" y="207.30" width="7.35" height="15.05" fill="#b8d4e8"/><rect x="648.94" y="207.30" width="7.35" height="15.05" fill="#b8d4e8"/><rect x="655.79" y="207.30" width="7.35" height="15.05" fill="#b8d4e8"/><rect x="662.64" y="207.30" width="7.35" height="15.05" fill="#b8d4e8"/><rect x="525.68" y="222.20" width="7.35" height="15.05" fill="#91bfdf"/><rect x="532.52" y="222.20" width="7.35" height="15.05" fill="#1a80c3"/><rect x="539.37" y="222.20" width="7.35" height="15.05" fill="#0072bd"/><rect x="546.22" y="222.20" width="7.35" height="15.05" fill="#509dd0"/><rect x="553.07" y="222.20" width="7.35" height="15.05" fill="#6dacd6"/><rect x="559.92" y="222.20" width="7.35" height="15.05" fill="#82b7db"/><rect x="566.76" y="222.20" width="7.35" height="15.05" fill="#9ec6e2"/><rect x="573.61" y="222.20" width="7.35" height="15.05" fill="#abcde5"/><rect x="580.46" y="222.20" width="7.35" height="15.05" fill="#b8d4e8"/><rect x="587.31" y="222.20" width="7.35" height="15.05" fill="#b8d4e8"/><rect x="594.16" y="222.20" width="7.35" height="15.05" fill="#b8d4e8"/><rect x="601.00" y="222.20" width="7.35" height="15.05" fill="#b8d4e8"/><rect x="607.85" y="222.20" width="7.35" height="15.05" fill="#b8d4e8"/><rect x="614.70" y="222.20" width="7.35" height="15.05" fill="#b8d4e8"/><rect x="635.24" y="222.20" width="7.35" height="15.05" fill="#b8d4e8"/><rect x="532.52" y="237.10" width="7.35" height="15.05" fill="#b8d4e8"/><rect x="539.37" y="237.10" width="7.35" height="15.05" fill="#89bbdd"/><rect x="546.22" y="237.10" width="7.35" height="15.05" fill="#82b7db"/><rect x="553.07" y="237.10" width="7.35" height="15.05" fill="#0072bd"/><rect x="559.92" y="237.10" width="7.35" height="15.05" fill="#82b7db"/><rect x="566.76" y="237.10" width="7.35" height="15.05" fill="#539ed0"/><rect x="573.61" y="237.10" width="7.35" height="15.05" fill="#89bbdd"/><rect x="580.46" y="237.10" width="7.35" height="15.05" fill="#abcde5"/><rect x="587.31" y="237.10" width="7.35" height="15.05" fill="#b8d4e8"/><rect x="457.20" y="266.90" width="7.35" height="15.05" fill="#b8d4e8"/><rect x="464.04" y="266.90" width="7.35" height="15.05" fill="#abcde5"/><rect x="470.89" y="266.90" width="7.35" height="15.05" fill="#89bbdd"/><rect x="477.74" y="266.90" width="7.35" height="15.05" fill="#58a1d2"/><rect x="484.59" y="266.90" width="7.35" height="15.05" fill="#2f8bc8"/><rect x="491.44" y="266.90" width="7.35" height="15.05" fill="#318cc9"/><rect x="498.28" y="266.90" width="7.35" height="15.05" fill="#2f8bc8"/><rect x="505.13" y="266.90" width="7.35" height="15.05" fill="#2787c6"/><rect x="511.98" y="266.90" width="7.35" height="15.05" fill="#0d79c0"/><rect x="518.83" y="266.90" width="7.35" height="15.05" fill="#0072bd"/><rect x="525.68" y="266.90" width="7.35" height="15.05" fill="#2c89c7"/><rect x="532.52" y="266.90" width="7.35" height="15.05" fill="#6dacd6"/><rect x="539.37" y="266.90" width="7.35" height="15.05" fill="#96c2e0"/><rect x="546.22" y="266.90" width="7.35" height="15.05" fill="#b0d0e6"/><rect x="553.07" y="266.90" width="7.35" height="15.05" fill="#b8d4e8"/><rect x="559.92" y="266.90" width="7.35" height="15.05" fill="#b8d4e8"/><rect x="566.76" y="266.90" width="7.35" height="15.05" fill="#b8d4e8"/><rect x="573.61" y="266.90" width="7.35" height="15.05" fill="#b8d4e8"/><rect x="580.46" y="266.90" width="7.35" height="15.05" fill="#b8d4e8"/><rect x="587.31" y="266.90" width="7.35" height="15.05" fill="#b8d4e8"/><rect x="594.16" y="266.90" width="7.35" height="15.05" fill="#b8d4e8"/><rect x="601.00" y="266.90" width="7.35" height="15.05" fill="#b8d4e8"/><rect x="607.85" y="266.90" width="7.35" height="15.05" fill="#b8d4e8"/><rect x="614.70" y="266.90" width="7.35" height="15.05" fill="#b8d4e8"/><rect x="621.55" y="266.90" width="7.35" height="15.05" fill="#b8d4e8"/><rect x="628.40" y="266.90" width="7.35" height="15.05" fill="#b8d4e8"/><rect x="635.24" y="266.90" width="7.35" height="15.05" fill="#b8d4e8"/><rect x="642.09" y="266.90" width="7.35" height="15.05" fill="#b8d4e8"/><rect x="648.94" y="266.90" width="7.35" height="15.05" fill="#b8d4e8"/><rect x="662.64" y="266.90" width="7.35" height="15.05" fill="#b8d4e8"/><rect x="457.20" y="296.70" width="7.35" height="15.05" fill="#b8d4e8"/><rect x="464.04" y="296.70" width="7.35" height="15.05" fill="#abcde5"/><rect x="470.89" y="296.70" width="7.35" height="15.05" fill="#96c2e0"/><rect x="477.74" y="296.70" width="7.35" height="15.05" fill="#6dacd6"/><rect x="484.59" y="296.70" width="7.35" height="15.05" fill="#4396cd"/><rect x="491.44" y="296.70" width="7.35" height="15.05" fill="#4697cd"/><rect x="498.28" y="296.70" width="7.35" height="15.05" fill="#4396cd"/><rect x="505.13" y="296.70" width="7.35" height="15.05" fill="#2b89c7"/><rect x="511.98" y="296.70" width="7.35" height="15.05" fill="#0d79c0"/><rect x="518.83" y="296.70" width="7.35" height="15.05" fill="#2b89c7"/><rect x="525.68" y="296.70" width="7.35" height="15.05" fill="#6dacd6"/><rect x="532.52" y="296.70" width="7.35" height="15.05" fill="#9ec6e2"/><rect x="539.37" y="296.70" width="7.35" height="15.05" fill="#b0d0e6"/><rect x="546.22" y="296.70" width="7.35" height="15.05" fill="#b8d4e8"/><rect x="553.07" y="296.70" width="7.35" height="15.05" fill="#b8d4e8"/><rect x="559.92" y="296.70" width="7.35" height="15.05" fill="#b8d4e8"/><rect x="566.76" y="296.70" width="7.35" height="15.05" fill="#b8d4e8"/><rect x="573.61" y="296.70" width="7.35" height="15.05" fill="#b8d4e8"/><rect x="580.46" y="296.70" width="7.35" height="15.05" fill="#b8d4e8"/><rect x="587.31" y="296.70" width="7.35" height="15.05" fill="#b8d4e8"/><rect x="594.16" y="296.70" width="7.35" height="15.05" fill="#b8d4e8"/><rect x="601.00" y="296.70" width="7.35" height="15.05" fill="#b8d4e8"/><rect x="607.85" y="296.70" width="7.35" height="15.05" fill="#b8d4e8"/><rect x="614.70" y="296.70" width="7.35" height="15.05" fill="#b8d4e8"/><rect x="621.55" y="296.70" width="7.35" height="15.05" fill="#b8d4e8"/><rect x="628.40" y="296.70" width="7.35" height="15.05" fill="#b8d4e8"/><rect x="635.24" y="296.70" width="7.35" height="15.05" fill="#b8d4e8"/><rect x="642.09" y="296.70" width="7.35" height="15.05" fill="#b8d4e8"/><rect x="648.94" y="296.70" width="7.35" height="15.05" fill="#b8d4e8"/><rect x="450.35" y="326.50" width="7.35" height="15.05" fill="#b8d4e8"/><rect x="457.20" y="326.50" width="7.35" height="15.05" fill="#b5d3e7"/><rect x="464.04" y="326.50" width="7.35" height="15.05" fill="#96c2e0"/><rect x="470.89" y="326.50" width="7.35" height="15.05" fill="#6dacd6"/><rect x="477.74" y="326.50" width="7.35" height="15.05" fill="#2988c7"/><rect x="484.59" y="326.50" width="7.35" height="15.05" fill="#0072bd"/><rect x="491.44" y="326.50" width="7.35" height="15.05" fill="#56a0d1"/><rect x="498.28" y="326.50" width="7.35" height="15.05" fill="#56a0d1"/><rect x="505.13" y="326.50" width="7.35" height="15.05" fill="#82b7db"/><rect x="511.98" y="326.50" width="7.35" height="15.05" fill="#9ec6e2"/><rect x="518.83" y="326.50" width="7.35" height="15.05" fill="#b0d0e6"/><rect x="525.68" y="326.50" width="7.35" height="15.05" fill="#b8d4e8"/><rect x="532.52" y="326.50" width="7.35" height="15.05" fill="#b8d4e8"/><rect x="539.37" y="326.50" width="7.35" height="15.05" fill="#b8d4e8"/><rect x="546.22" y="326.50" width="7.35" height="15.05" fill="#b8d4e8"/><rect x="553.07" y="326.50" width="7.35" height="15.05" fill="#b8d4e8"/><rect x="559.92" y="326.50" width="7.35" height="15.05" fill="#b8d4e8"/><rect x="566.76" y="326.50" width="7.35" height="15.05" fill="#b8d4e8"/><rect x="573.61" y="326.50" width="7.35" height="15.05" fill="#b8d4e8"/><rect x="580.46" y="326.50" width="7.35" height="15.05" fill="#b8d4e8"/><rect x="587.31" y="326.50" width="7.35" height="15.05" fill="#b8d4e8"/><rect x="594.16" y="326.50" width="7.35" height="15.05" fill="#b8d4e8"/><rect x="601.00" y="326.50" width="7.35" height="15.05" fill="#b8d4e8"/><rect x="607.85" y="326.50" width="7.35" height="15.05" fill="#b8d4e8"/><rect x="614.70" y="326.50" width="7.35" height="15.05" fill="#b8d4e8"/><rect x="518.83" y="341.40" width="7.35" height="15.05" fill="#b8d4e8"/><rect x="525.68" y="341.40" width="7.35" height="15.05" fill="#9ec6e2"/><rect x="532.52" y="341.40" width="7.35" height="15.05" fill="#3c92cb"/><rect x="539.37" y="341.40" width="7.35" height="15.05" fill="#107ac1"/><rect x="546.22" y="341.40" width="7.35" height="15.05" fill="#1a80c3"/><rect x="553.07" y="341.40" width="7.35" height="15.05" fill="#0072bd"/><rect x="559.92" y="341.40" width="7.35" height="15.05" fill="#56a0d1"/><rect x="566.76" y="341.40" width="7.35" height="15.05" fill="#91bfdf"/><rect x="573.61" y="341.40" width="7.35" height="15.05" fill="#abcde5"/><rect x="580.46" y="341.40" width="7.35" height="15.05" fill="#b0d0e6"/><rect x="587.31" y="341.40" width="7.35" height="15.05" fill="#b8d4e8"/><rect x="594.16" y="341.40" width="7.35" height="15.05" fill="#b8d4e8"/><rect x="601.00" y="341.40" width="7.35" height="15.05" fill="#b8d4e8"/><rect x="607.85" y="341.40" width="7.35" height="15.05" fill="#b8d4e8"/><rect x="539.37" y="356.30" width="7.35" height="15.05" fill="#6dacd6"/><rect x="546.22" y="356.30" width="7.35" height="15.05" fill="#0072bd"/><rect x="553.07" y="356.30" width="7.35" height="15.05" fill="#6dacd6"/><rect x="559.92" y="356.30" width="7.35" height="15.05" fill="#96c2e0"/><rect x="580.46" y="356.30" width="7.35" height="15.05" fill="#b8d4e8"/><rect x="614.70" y="356.30" width="7.35" height="15.05" fill="#b8d4e8"/><rect x="450.35" y="386.10" width="7.35" height="15.05" fill="#b8d4e8"/><rect x="457.20" y="386.10" width="7.35" height="15.05" fill="#b5d3e7"/><rect x="464.04" y="386.10" width="7.35" height="15.05" fill="#96c2e0"/><rect x="470.89" y="386.10" width="7.35" height="15.05" fill="#82b7db"/><rect x="477.74" y="386.10" width="7.35" height="15.05" fill="#2988c7"/><rect x="484.59" y="386.10" width="7.35" height="15.05" fill="#0072bd"/><rect x="491.44" y="386.10" width="7.35" height="15.05" fill="#56a0d1"/><rect x="498.28" y="386.10" width="7.35" height="15.05" fill="#56a0d1"/><rect x="505.13" y="386.10" width="7.35" height="15.05" fill="#89bbdd"/><rect x="511.98" y="386.10" width="7.35" height="15.05" fill="#abcde5"/><rect x="518.83" y="386.10" width="7.35" height="15.05" fill="#b3d1e7"/><rect x="525.68" y="386.10" width="7.35" height="15.05" fill="#b8d4e8"/><rect x="532.52" y="386.10" width="7.35" height="15.05" fill="#b8d4e8"/><rect x="539.37" y="386.10" width="7.35" height="15.05" fill="#b8d4e8"/><rect x="546.22" y="386.10" width="7.35" height="15.05" fill="#b8d4e8"/><rect x="553.07" y="386.10" width="7.35" height="15.05" fill="#b8d4e8"/><rect x="559.92" y="386.10" width="7.35" height="15.05" fill="#b8d4e8"/><rect x="566.76" y="386.10" width="7.35" height="15.05" fill="#b8d4e8"/><rect x="573.61" y="386.10" width="7.35" height="15.05" fill="#b8d4e8"/><rect x="580.46" y="386.10" width="7.35" height="15.05" fill="#b8d4e8"/><rect x="587.31" y="386.10" width="7.35" height="15.05" fill="#b8d4e8"/><rect x="594.16" y="386.10" width="7.35" height="15.05" fill="#b8d4e8"/><rect x="601.00" y="386.10" width="7.35" height="15.05" fill="#b8d4e8"/><rect x="450.35" y="415.90" width="7.35" height="15.05" fill="#b8d4e8"/><rect x="457.20" y="415.90" width="7.35" height="15.05" fill="#b8d4e8"/><rect x="464.04" y="415.90" width="7.35" height="15.05" fill="#b0d0e6"/><rect x="470.89" y="415.90" width="7.35" height="15.05" fill="#89bbdd"/><rect x="477.74" y="415.90" width="7.35" height="15.05" fill="#2988c7"/><rect x="484.59" y="415.90" width="7.35" height="15.05" fill="#0072bd"/><rect x="491.44" y="415.90" width="7.35" height="15.05" fill="#2f8bc8"/><rect x="498.28" y="415.90" width="7.35" height="15.05" fill="#56a0d1"/><rect x="505.13" y="415.90" width="7.35" height="15.05" fill="#91bfdf"/><rect x="511.98" y="415.90" width="7.35" height="15.05" fill="#abcde5"/><rect x="518.83" y="415.90" width="7.35" height="15.05" fill="#b3d1e7"/><rect x="525.68" y="415.90" width="7.35" height="15.05" fill="#b8d4e8"/><rect x="532.52" y="415.90" width="7.35" height="15.05" fill="#b8d4e8"/><rect x="539.37" y="415.90" width="7.35" height="15.05" fill="#b8d4e8"/><rect x="546.22" y="415.90" width="7.35" height="15.05" fill="#b8d4e8"/><rect x="553.07" y="415.90" width="7.35" height="15.05" fill="#b8d4e8"/><rect x="559.92" y="415.90" width="7.35" height="15.05" fill="#b8d4e8"/><rect x="566.76" y="415.90" width="7.35" height="15.05" fill="#b8d4e8"/><rect x="573.61" y="415.90" width="7.35" height="15.05" fill="#b8d4e8"/><rect x="580.46" y="415.90" width="7.35" height="15.05" fill="#b8d4e8"/><rect x="587.31" y="415.90" width="7.35" height="15.05" fill="#b8d4e8"/><rect x="594.16" y="415.90" width="7.35" height="15.05" fill="#b8d4e8"/><rect x="601.00" y="415.90" width="7.35" height="15.05" fill="#b8d4e8"/><rect x="607.85" y="415.90" width="7.35" height="15.05" fill="#b8d4e8"/><rect x="614.70" y="415.90" width="7.35" height="15.05" fill="#b8d4e8"/><rect x="621.55" y="415.90" width="7.35" height="15.05" fill="#b8d4e8"/><rect x="628.40" y="415.90" width="7.35" height="15.05" fill="#b8d4e8"/><rect x="635.24" y="415.90" width="7.35" height="15.05" fill="#b8d4e8"/><rect x="525.68" y="430.80" width="7.35" height="15.05" fill="#abcde5"/><rect x="532.52" y="430.80" width="7.35" height="15.05" fill="#509dd0"/><rect x="539.37" y="430.80" width="7.35" height="15.05" fill="#1a80c3"/><rect x="546.22" y="430.80" width="7.35" height="15.05" fill="#0072bd"/><rect x="553.07" y="430.80" width="7.35" height="15.05" fill="#2f8bc8"/><rect x="559.92" y="430.80" width="7.35" height="15.05" fill="#6dacd6"/><rect x="566.76" y="430.80" width="7.35" height="15.05" fill="#96c2e0"/><rect x="573.61" y="430.80" width="7.35" height="15.05" fill="#abcde5"/><rect x="580.46" y="430.80" width="7.35" height="15.05" fill="#b8d4e8"/><rect x="587.31" y="430.80" width="7.35" height="15.05" fill="#b8d4e8"/><rect x="594.16" y="430.80" width="7.35" height="15.05" fill="#b8d4e8"/><rect x="601.00" y="430.80" width="7.35" height="15.05" fill="#b8d4e8"/><rect x="607.85" y="430.80" width="7.35" height="15.05" fill="#b8d4e8"/><rect x="621.55" y="430.80" width="7.35" height="15.05" fill="#b8d4e8"/><rect x="628.40" y="430.80" width="7.35" height="15.05" fill="#b8d4e8"/><path d="M443.50 133V443" stroke="#828282" stroke-width="1" stroke-dasharray="1.7 2.36" opacity=".72"/><path d="M470.89 133V443" stroke="#828282" stroke-width="1" stroke-dasharray="1.7 2.36" opacity=".72"/><path d="M498.28 133V443" stroke="#828282" stroke-width="1" stroke-dasharray="1.7 2.36" opacity=".72"/><path d="M525.68 133V443" stroke="#444" stroke-width="0.95"/><path d="M553.07 133V443" stroke="#828282" stroke-width="1" stroke-dasharray="1.7 2.36" opacity=".72"/><path d="M580.46 133V443" stroke="#828282" stroke-width="1" stroke-dasharray="1.7 2.36" opacity=".72"/><path d="M607.85 133V443" stroke="#828282" stroke-width="1" stroke-dasharray="1.7 2.36" opacity=".72"/><path d="M635.24 133V443" stroke="#828282" stroke-width="1" stroke-dasharray="1.7 2.36" opacity=".72"/><path d="M662.64 133V443" stroke="#828282" stroke-width="1" stroke-dasharray="1.7 2.36" opacity=".72"/><path d="M690.03 133V443" stroke="#828282" stroke-width="1" stroke-dasharray="1.7 2.36" opacity=".72"/><path d="M717.42 133V443" stroke="#828282" stroke-width="1" stroke-dasharray="1.7 2.36" opacity=".72"/><path d="M744.81 133V443" stroke="#828282" stroke-width="1" stroke-dasharray="1.7 2.36" opacity=".72"/><path d="M443.0 132.9H745.31" stroke="#c2c2c2" stroke-width="1.1"/></svg>
<div class="t" style="left:439.15px;top:122.70px;font-size:9.6px;color:#333;transform:scaleX(0.7304);transform-origin:0 0">2</div>
<div class="t" style="left:443.35px;top:122.60px;font-size:6.1px;color:#333;transform:scaleX(0.7221);transform-origin:0 0">12</div>
<div class="t" style="left:467.77px;top:122.70px;font-size:9.6px;color:#333;transform:scaleX(0.7304);transform-origin:0 0">2</div>
<div class="t" style="left:471.97px;top:122.60px;font-size:6.1px;color:#333;transform:scaleX(0.7221);transform-origin:0 0">8</div>
<div class="t" style="left:495.16px;top:122.70px;font-size:9.6px;color:#333;transform:scaleX(0.7304);transform-origin:0 0">2</div>
<div class="t" style="left:499.36px;top:122.60px;font-size:6.1px;color:#333;transform:scaleX(0.7221);transform-origin:0 0">4</div>
<div class="t" style="left:522.55px;top:122.70px;font-size:9.6px;color:#333;transform:scaleX(0.7304);transform-origin:0 0">2</div>
<div class="t" style="left:526.75px;top:122.60px;font-size:6.1px;color:#333;transform:scaleX(0.7221);transform-origin:0 0">0</div>
<div class="t" style="left:549.19px;top:122.70px;font-size:9.6px;color:#333;transform:scaleX(0.7304);transform-origin:0 0">2</div>
<div class="t" style="left:553.39px;top:122.60px;font-size:6.1px;color:#333;transform:scaleX(0.7282);transform-origin:0 0">-4</div>
<div class="t" style="left:576.59px;top:122.70px;font-size:9.6px;color:#333;transform:scaleX(0.7304);transform-origin:0 0">2</div>
<div class="t" style="left:580.79px;top:122.60px;font-size:6.1px;color:#333;transform:scaleX(0.7282);transform-origin:0 0">-8</div>
<div class="t" style="left:602.75px;top:122.70px;font-size:9.6px;color:#333;transform:scaleX(0.7304);transform-origin:0 0">2</div>
<div class="t" style="left:606.95px;top:122.60px;font-size:6.1px;color:#333;transform:scaleX(0.7259);transform-origin:0 0">-12</div>
<div class="t" style="left:630.14px;top:122.70px;font-size:9.6px;color:#333;transform:scaleX(0.7304);transform-origin:0 0">2</div>
<div class="t" style="left:634.34px;top:122.60px;font-size:6.1px;color:#333;transform:scaleX(0.7259);transform-origin:0 0">-16</div>
<div class="t" style="left:657.54px;top:122.70px;font-size:9.6px;color:#333;transform:scaleX(0.7304);transform-origin:0 0">2</div>
<div class="t" style="left:661.74px;top:122.60px;font-size:6.1px;color:#333;transform:scaleX(0.7259);transform-origin:0 0">-20</div>
<div class="t" style="left:684.93px;top:122.70px;font-size:9.6px;color:#333;transform:scaleX(0.7304);transform-origin:0 0">2</div>
<div class="t" style="left:689.13px;top:122.60px;font-size:6.1px;color:#333;transform:scaleX(0.7259);transform-origin:0 0">-24</div>
<div class="t" style="left:712.32px;top:122.70px;font-size:9.6px;color:#333;transform:scaleX(0.7304);transform-origin:0 0">2</div>
<div class="t" style="left:716.52px;top:122.60px;font-size:6.1px;color:#333;transform:scaleX(0.7259);transform-origin:0 0">-28</div>
<div class="t" style="left:739.71px;top:122.70px;font-size:9.6px;color:#333;transform:scaleX(0.7304);transform-origin:0 0">2</div>
<div class="t" style="left:743.91px;top:122.60px;font-size:6.1px;color:#333;transform:scaleX(0.7259);transform-origin:0 0">-32</div>
<div class="a" style="left:758px;top:98px;width:11px;height:345px;background:#f1f1f1"></div>
<svg class="a" style="left:760px;top:434.5px" width="7" height="4" viewBox="0 0 7 4"><path d="M1 0.4h4.8L3.4 3.4z" fill="#222"/></svg>
<div class="a" style="left:759px;top:109.3px;width:9px;height:38px;background:#c4c4c4"></div>
<svg class="a" style="left:759.3px;top:100.9px" width="8" height="5" viewBox="0 0 8 5"><path d="M1 4L4 0.8L7 4z" fill="#b0b0b0"/></svg>
</body></html>
